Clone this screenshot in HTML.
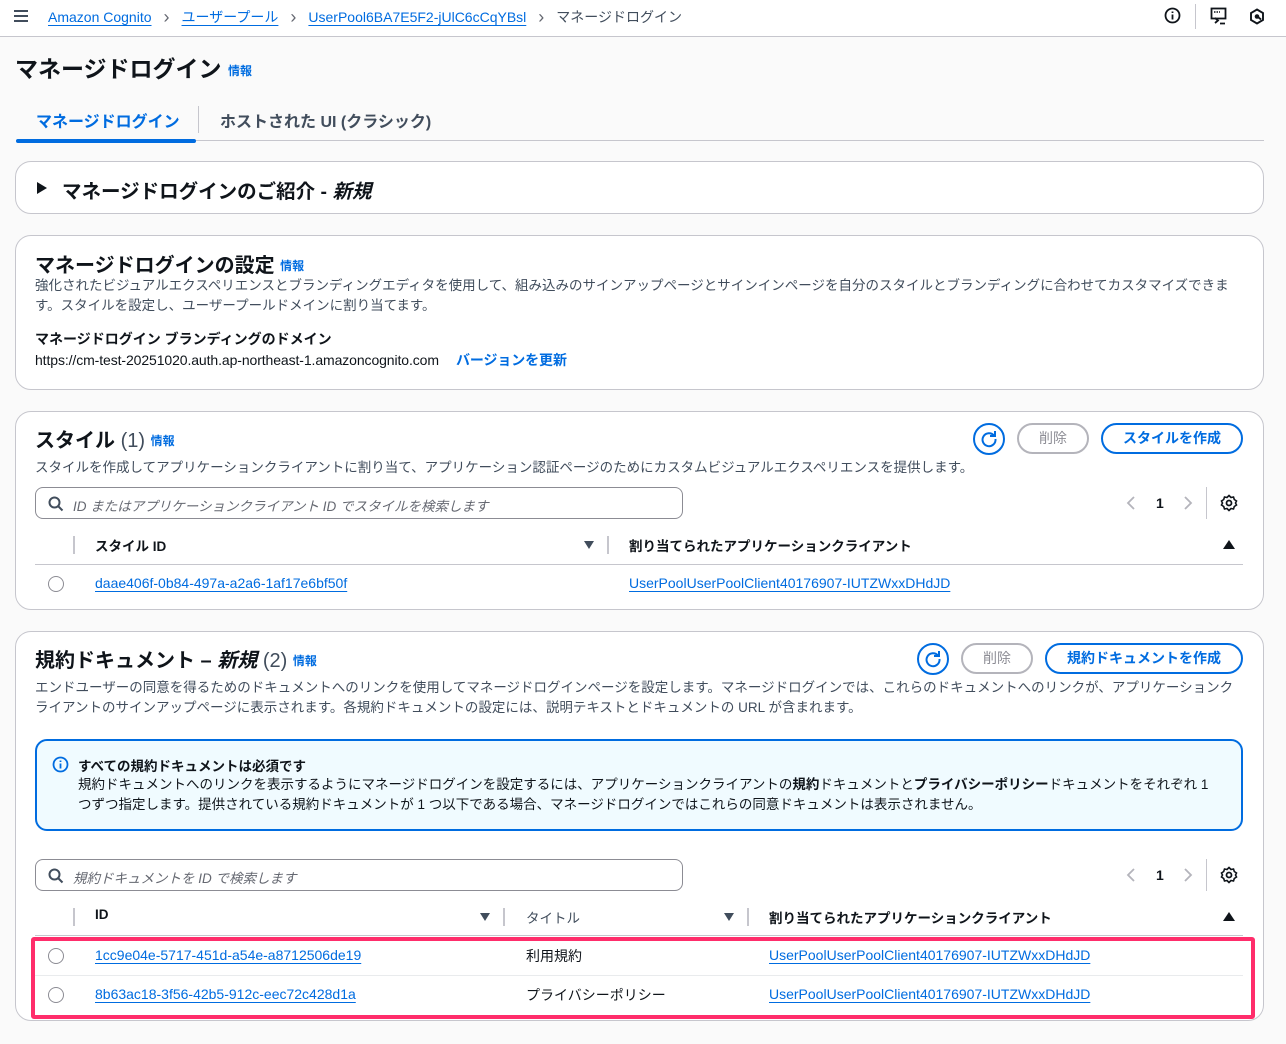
<!DOCTYPE html>
<html><head><meta charset="utf-8"><style>
*{box-sizing:border-box;margin:0;padding:0}
body{width:1286px;height:1044px;background:#fafafa;font-family:"Liberation Sans","Noto Sans CJK JP",sans-serif;color:#0f141a;font-size:14px;position:relative;overflow:hidden}
.a{position:absolute;white-space:nowrap}
.lk{color:#006ce0;text-decoration:underline;text-underline-offset:3px}
.card{position:absolute;left:15px;width:1249px;background:#fff;border:1px solid #c6c6cd;border-radius:16px}
.info{color:#006ce0;font-size:12px;font-weight:bold}
.desc{color:#414d5c;font-size:13.5px;line-height:20px}
.btn{position:absolute;height:31px;border:2px solid #006ce0;border-radius:16px;color:#006ce0;font-weight:bold;font-size:14px;text-align:center;line-height:27px}
.btn.dis{border-color:#b4b4bb;color:#8c8c94;font-weight:normal}
.ref{position:absolute;width:32px;height:32px;border:2px solid #006ce0;border-radius:50%}
.search{position:absolute;left:35px;width:648px;height:32px;border:1px solid #8c8c94;border-radius:8px;background:#fff}
.search span{position:absolute;left:37px;top:7px;color:#656871;font-style:italic;font-size:13.5px}
.th{position:absolute;font-weight:bold;font-size:13.5px}
.sep{position:absolute;width:2px;height:18px;background:#c6c6cd}
.radio{position:absolute;width:16px;height:16px;border:1.5px solid #8c8c94;border-radius:50%}
.hl{position:absolute;height:1px;background:#c6c6cd}
.chev{color:#656871;margin:0 12px;font-size:18px;vertical-align:-1px}
.pg{position:absolute;color:#b4b4bb}
</style></head><body>
<div style="position:absolute;left:0;top:0;width:1286px;height:37px;background:#fff;border-bottom:1px solid #c6c6cd"></div>
<svg class="a" style="left:13px;top:9px" width="16" height="14"><path d="M1 2h14M1 7h14M1 12h14" stroke="#414d5c" stroke-width="2"/></svg>
<div class="a" style="left:48px;top:7px;font-size:14px"><span class="lk">Amazon Cognito</span><span class="chev">›</span><span class="lk">ユーザープール</span><span class="chev">›</span><span class="lk">UserPool6BA7E5F2-jUlC6cCqYBsl</span><span class="chev">›</span><span style="color:#414d5c">マネージドログイン</span></div>
<svg class="a" style="left:1164px;top:7px" width="17" height="17"><circle cx="8.5" cy="8.5" r="7" fill="none" stroke="#0f141a" stroke-width="1.8"/><path d="M8.5 7.5v5M8.5 4.5v1.5" stroke="#0f141a" stroke-width="1.8"/></svg>
<div class="a" style="left:1195px;top:4px;width:1px;height:25px;background:#c6c6cd"></div>
<svg class="a" style="left:1210px;top:7px" width="18" height="18"><rect x="1.5" y="1.5" width="14" height="10" fill="none" stroke="#0f141a" stroke-width="1.8"/><path d="M4 5h6" stroke="#0f141a" stroke-width="1.5" stroke-dasharray="1.5 1"/><path d="M5 11l3 2.5-3 2.5M10 16.5h5" stroke="#0f141a" stroke-width="1.8" fill="none"/></svg>
<svg class="a" style="left:1249px;top:8px" width="16" height="17"><path d="M8 1.5l6 3.5v7l-6 3.5-6-3.5v-7z" fill="none" stroke="#0f141a" stroke-width="1.9"/><circle cx="8" cy="8.5" r="2.3" fill="#0f141a"/><path d="M9 9l3 2.5" stroke="#0f141a" stroke-width="1.8"/></svg>

<div class="a" style="left:15px;top:50px;font-size:23px;font-weight:bold">マネージドログイン <span class="info" style="vertical-align:2px">情報</span></div>
<div class="a" style="left:36px;top:108px;font-size:16px;font-weight:bold;color:#006ce0">マネージドログイン</div>
<div class="a" style="left:198px;top:106px;width:1px;height:27px;background:#c6c6cd"></div>
<div class="a" style="left:220px;top:108px;font-size:16px;font-weight:bold;color:#414d5c">ホストされた UI (クラシック)</div>
<div class="a" style="left:16px;top:140px;width:1248px;height:1px;background:#c6c6cd"></div>
<div class="a" style="left:16px;top:139px;width:180px;height:4px;background:#006ce0;border-radius:2px"></div>

<div class="card" style="top:161px;height:53px"></div>
<div class="a" style="left:37px;top:182px;width:0;height:0;border-left:10px solid #0f141a;border-top:6px solid transparent;border-bottom:6px solid transparent"></div>
<div class="a" style="left:62px;top:175px;font-size:19.5px;font-weight:bold">マネージドログインのご紹介 - <i>新規</i></div>

<div class="card" style="top:235px;height:155px"></div>
<div class="a" style="left:35px;top:249px;font-size:20px;font-weight:bold">マネージドログインの設定 <span class="info" style="vertical-align:2px">情報</span></div>
<div class="a desc" style="left:35px;top:276px;white-space:normal;width:1205px">強化されたビジュアルエクスペリエンスとブランディングエディタを使用して、組み込みのサインアップページとサインインページを自分のスタイルとブランディングに合わせてカスタマイズできます。スタイルを設定し、ユーザープールドメインに割り当てます。</div>
<div class="a" style="left:35px;top:329px;font-weight:bold;font-size:14px">マネージドログイン ブランディングのドメイン</div>
<div class="a" style="left:35px;top:350px;font-size:14px;letter-spacing:-0.1px">https://cm-test-20251020.auth.ap-northeast-1.amazoncognito.com<span style="color:#006ce0;font-weight:bold;margin-left:17px">バージョンを更新</span></div>

<div class="card" style="top:411px;height:199px"></div>
<div class="a" style="left:35px;top:424px;font-size:20px;font-weight:bold">スタイル <span style="font-weight:normal;color:#414d5c">(1)</span> <span class="info" style="vertical-align:2px">情報</span></div>
<div class="ref" style="left:973px;top:423px"></div>
<svg class="a" style="left:979px;top:429px" width="20" height="20"><path d="M15 6.5A6.5 6.5 0 1 0 16.5 10" fill="none" stroke="#006ce0" stroke-width="2"/><path d="M16 2v5h-5" fill="none" stroke="#006ce0" stroke-width="2"/></svg>
<div class="btn dis" style="left:1017px;top:423px;width:72px">削除</div>
<div class="btn" style="left:1101px;top:423px;width:142px">スタイルを作成</div>
<div class="a desc" style="left:35px;top:458px">スタイルを作成してアプリケーションクライアントに割り当て、アプリケーション認証ページのためにカスタムビジュアルエクスペリエンスを提供します。</div>
<div class="search" style="top:487px"><svg class="a" style="left:12px;top:8px" width="16" height="16"><circle cx="6.5" cy="6.5" r="5" fill="none" stroke="#414d5c" stroke-width="2"/><path d="M10 10l4.5 4.5" stroke="#414d5c" stroke-width="2"/></svg><span>ID またはアプリケーションクライアント ID でスタイルを検索します</span></div>
<svg class="pg" style="left:1126px;top:495px" width="10" height="16"><path d="M8 2L2 8l6 6" fill="none" stroke="#b4b4bb" stroke-width="1.8"/></svg>
<div class="a" style="left:1156px;top:495px;font-weight:bold">1</div>
<svg class="pg" style="left:1183px;top:495px" width="10" height="16"><path d="M2 2l6 6-6 6" fill="none" stroke="#b4b4bb" stroke-width="1.8"/></svg>
<div class="a" style="left:1206px;top:487px;width:1px;height:32px;background:#c6c6cd"></div>
<svg class="a" style="left:1220px;top:494px" width="18" height="18"><circle cx="9" cy="9" r="2.5" fill="none" stroke="#0f141a" stroke-width="1.8"/><path d="M9 1.5l2 2 2.5-.5 .8 2.5 2.2 1.5-1 2 1 2-2.2 1.5-.8 2.5-2.5-.5-2 2-2-2-2.5.5-.8-2.5-2.2-1.5 1-2-1-2 2.2-1.5.8-2.5 2.5.5z" fill="none" stroke="#0f141a" stroke-width="1.6"/></svg>
<div class="sep" style="left:73px;top:536px"></div>
<div class="th" style="left:95px;top:535px">スタイル ID</div>
<div class="a" style="left:584px;top:541px;width:0;height:0;border-top:8px solid #414d5c;border-left:5px solid transparent;border-right:5px solid transparent"></div>
<div class="sep" style="left:607px;top:536px"></div>
<div class="th" style="left:629px;top:535px">割り当てられたアプリケーションクライアント</div>
<div class="a" style="left:1223px;top:540px;width:0;height:0;border-bottom:9px solid #0f141a;border-left:6px solid transparent;border-right:6px solid transparent"></div>
<div class="hl" style="left:35px;top:564px;width:1208px"></div>
<div class="radio" style="left:48px;top:576px"></div>
<div class="a lk" style="left:95px;top:575px">daae406f-0b84-497a-a2a6-1af17e6bf50f</div>
<div class="a lk" style="left:629px;top:575px">UserPoolUserPoolClient40176907-IUTZWxxDHdJD</div>

<div class="card" style="top:631px;height:390px"></div>
<div class="a" style="left:35px;top:644px;font-size:20px;font-weight:bold">規約ドキュメント – <i>新規</i> <span style="font-weight:normal;color:#414d5c">(2)</span> <span class="info" style="vertical-align:2px">情報</span></div>
<div class="ref" style="left:917px;top:643px"></div>
<svg class="a" style="left:923px;top:649px" width="20" height="20"><path d="M15 6.5A6.5 6.5 0 1 0 16.5 10" fill="none" stroke="#006ce0" stroke-width="2"/><path d="M16 2v5h-5" fill="none" stroke="#006ce0" stroke-width="2"/></svg>
<div class="btn dis" style="left:961px;top:643px;width:72px">削除</div>
<div class="btn" style="left:1045px;top:643px;width:198px">規約ドキュメントを作成</div>
<div class="a desc" style="left:35px;top:678px;white-space:normal;width:1200px">エンドユーザーの同意を得るためのドキュメントへのリンクを使用してマネージドログインページを設定します。マネージドログインでは、これらのドキュメントへのリンクが、アプリケーションクライアントのサインアップページに表示されます。各規約ドキュメントの設定には、説明テキストとドキュメントの URL が含まれます。</div>
<div class="a" style="left:35px;top:739px;width:1208px;height:92px;background:#f0fbff;border:2px solid #006ce0;border-radius:12px"></div>
<svg class="a" style="left:52px;top:756px" width="17" height="17"><circle cx="8.5" cy="8.5" r="7" fill="none" stroke="#006ce0" stroke-width="1.8"/><path d="M8.5 7.5v5M8.5 4.5v1.5" stroke="#006ce0" stroke-width="1.8"/></svg>
<div class="a" style="left:78px;top:755px;font-weight:bold;font-size:13.5px">すべての規約ドキュメントは必須です</div>
<div class="a" style="left:78px;top:775px;font-size:13.5px;line-height:20px;white-space:normal;width:1132px">規約ドキュメントへのリンクを表示するようにマネージドログインを設定するには、アプリケーションクライアントの<b>規約</b>ドキュメントと<b>プライバシーポリシー</b>ドキュメントをそれぞれ 1 つずつ指定します。提供されている規約ドキュメントが 1 つ以下である場合、マネージドログインではこれらの同意ドキュメントは表示されません。</div>
<div class="search" style="top:859px"><svg class="a" style="left:12px;top:8px" width="16" height="16"><circle cx="6.5" cy="6.5" r="5" fill="none" stroke="#414d5c" stroke-width="2"/><path d="M10 10l4.5 4.5" stroke="#414d5c" stroke-width="2"/></svg><span>規約ドキュメントを ID で検索します</span></div>
<svg class="pg" style="left:1126px;top:867px" width="10" height="16"><path d="M8 2L2 8l6 6" fill="none" stroke="#b4b4bb" stroke-width="1.8"/></svg>
<div class="a" style="left:1156px;top:867px;font-weight:bold">1</div>
<svg class="pg" style="left:1183px;top:867px" width="10" height="16"><path d="M2 2l6 6-6 6" fill="none" stroke="#b4b4bb" stroke-width="1.8"/></svg>
<div class="a" style="left:1206px;top:859px;width:1px;height:32px;background:#c6c6cd"></div>
<svg class="a" style="left:1220px;top:866px" width="18" height="18"><circle cx="9" cy="9" r="2.5" fill="none" stroke="#0f141a" stroke-width="1.8"/><path d="M9 1.5l2 2 2.5-.5 .8 2.5 2.2 1.5-1 2 1 2-2.2 1.5-.8 2.5-2.5-.5-2 2-2-2-2.5.5-.8-2.5-2.2-1.5 1-2-1-2 2.2-1.5.8-2.5 2.5.5z" fill="none" stroke="#0f141a" stroke-width="1.6"/></svg>
<div class="sep" style="left:73px;top:908px"></div>
<div class="th" style="left:95px;top:907px">ID</div>
<div class="a" style="left:480px;top:913px;width:0;height:0;border-top:8px solid #414d5c;border-left:5px solid transparent;border-right:5px solid transparent"></div>
<div class="sep" style="left:503px;top:908px"></div>
<div class="th" style="left:526px;top:907px;font-weight:normal;color:#414d5c">タイトル</div>
<div class="a" style="left:724px;top:913px;width:0;height:0;border-top:8px solid #414d5c;border-left:5px solid transparent;border-right:5px solid transparent"></div>
<div class="sep" style="left:747px;top:908px"></div>
<div class="th" style="left:769px;top:907px">割り当てられたアプリケーションクライアント</div>
<div class="a" style="left:1223px;top:912px;width:0;height:0;border-bottom:9px solid #0f141a;border-left:6px solid transparent;border-right:6px solid transparent"></div>
<div class="hl" style="left:35px;top:935px;width:1208px"></div>
<div class="radio" style="left:48px;top:948px"></div>
<div class="a lk" style="left:95px;top:947px">1cc9e04e-5717-451d-a54e-a8712506de19</div>
<div class="a" style="left:526px;top:946px">利用規約</div>
<div class="a lk" style="left:769px;top:947px">UserPoolUserPoolClient40176907-IUTZWxxDHdJD</div>
<div class="hl" style="left:35px;top:975px;width:1208px;background:#e9ebed"></div>
<div class="radio" style="left:48px;top:987px"></div>
<div class="a lk" style="left:95px;top:986px">8b63ac18-3f56-42b5-912c-eec72c428d1a</div>
<div class="a" style="left:526px;top:985px">プライバシーポリシー</div>
<div class="a lk" style="left:769px;top:986px">UserPoolUserPoolClient40176907-IUTZWxxDHdJD</div>
<div class="a" style="left:31px;top:937px;width:1224px;height:82px;border:4px solid #ff2d6b;border-radius:3px"></div>
</body></html>
